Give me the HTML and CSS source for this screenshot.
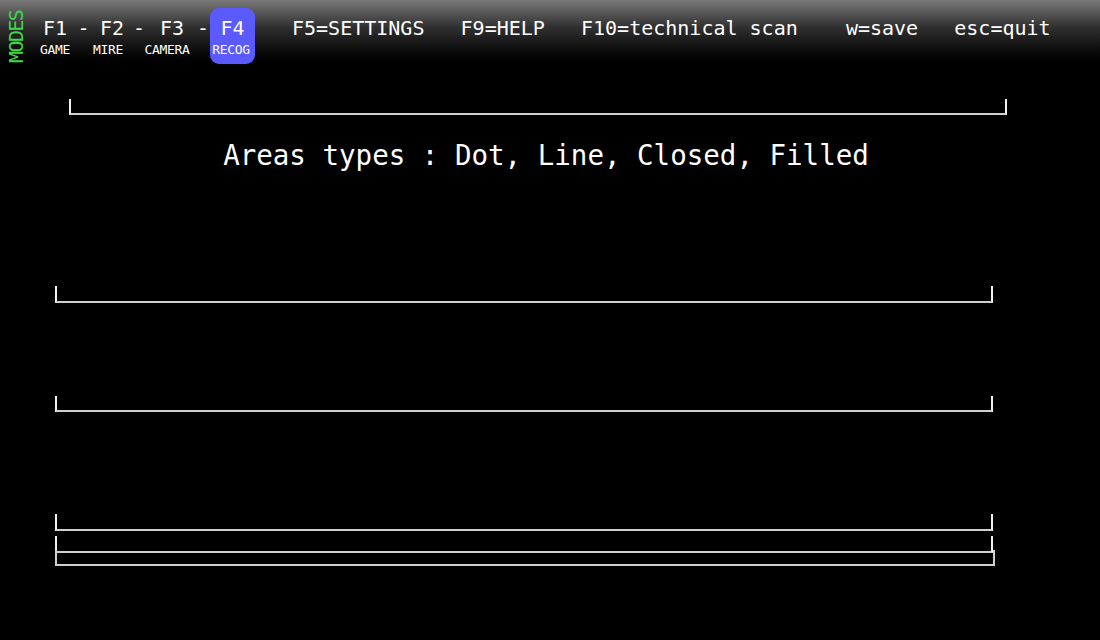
FILE: index.html
```html
<!DOCTYPE html>
<html>
<head>
<meta charset="utf-8">
<link rel="stylesheet" href="styles.css">
</head>
<body>
<header class="topbar">
  <div class="modes-label">MODES</div>
  <div class="modes">
    <div class="mode m1"><span class="key">F1</span><span class="sub">GAME</span></div>
    <span class="sep s1">-</span>
    <div class="mode m2"><span class="key">F2</span><span class="sub">MIRE</span></div>
    <span class="sep s2">-</span>
    <div class="mode m3"><span class="key">F3</span><span class="sub">CAMERA</span></div>
    <span class="sep s3">-</span>
    <div class="mode m4 active"><span class="key">F4</span><span class="sub">RECOG</span></div>
  </div>
  <div class="keys">F5=SETTINGS&nbsp;&nbsp;&nbsp;F9=HELP&nbsp;&nbsp;&nbsp;F10=technical scan&nbsp;&nbsp;&nbsp;&nbsp;w=save&nbsp;&nbsp;&nbsp;esc=quit</div>
</header>
<main class="content">
  <div class="bracket b1"></div>
  <div class="title">Areas types : Dot, Line, Closed, Filled</div>
  <div class="bracket b2"></div>
  <div class="bracket b3"></div>
  <div class="bracket b4"></div>
  <div class="bracket b5"></div>
  <div class="bracket b6"></div>
</main>
</body>
</html>
```
FILE: styles.css
```css
html, body {
  margin: 0;
  padding: 0;
  background: #000;
  color: #fff;
  font-family: "DejaVu Sans Mono", "Liberation Mono", monospace;
  width: 1100px;
  height: 640px;
  overflow: hidden;
}

.topbar {
  height: 64px;
  background: linear-gradient(#7a7a7a 0px, #303030 27px, #0a0a0a 52px, #000 62px);
  display: flex;
  align-items: flex-start;
}

.modes-label {
  writing-mode: vertical-rl;
  transform: rotate(180deg);
  color: #3fd64a;
  font-size: 20px;
  letter-spacing: -1.6px;
  line-height: 16px;
  width: 16px;
  margin-left: 8px;
  margin-top: 10px;
  height: 53px;
  text-align: left;
}

.modes {
  display: flex;
  align-items: flex-start;
  margin-left: 13px;
  margin-top: 8px;
}

.mode {
  display: flex;
  flex-direction: column;
  align-items: center;
  padding-top: 8px;
  padding-bottom: 6px;
}

.m1 { width: 36px; }
.m2 { width: 36px; }
.m3 { width: 48px; }
.m4 { width: 45px; }

.key {
  font-size: 20px;
  line-height: 24px;
  height: 24px;
}

.sub {
  font-size: 13px;
  line-height: 16px;
  letter-spacing: -0.35px;
  margin-top: 2px;
}

.m2 .sub { margin-right: 8px; }
.m3 .sub { margin-right: 10px; }
.m4 .sub { margin-right: 3px; }

.sep {
  font-size: 20px;
  line-height: 24px;
  margin-top: 8px;
  text-align: center;
}
.s1 { width: 21px; }
.s2 { width: 18px; }
.s3 { width: 14px; }

.active {
  background: #5a5aff;
  border-radius: 9px;
}

.keys {
  font-size: 20px;
  line-height: 24px;
  margin-top: 16px;
  margin-left: 37px;
  white-space: nowrap;
}

.content {
  display: flex;
  flex-direction: column;
  align-items: flex-start;
}

.bracket {
  box-sizing: border-box;
  height: 17px;
  width: 938px;
  margin-left: 55px;
  border-left: 2px solid #f2f2f2;
  border-right: 2px solid #f2f2f2;
  border-bottom: 2px solid #d0d0d0;
}

.b1 { margin-top: 35px; margin-left: 69px; height: 16px; }
.b2 { margin-top: 115px; }
.b3 { margin-top: 93px; height: 16px; }
.b4 { margin-top: 102px; }
.b5 { margin-top: 5px; }
.b6 { margin-top: -3px; width: 940px; height: 16px; border-color: #d0d0d0; }

.title {
  align-self: stretch;
  text-align: center;
  padding-right: 8px;
  font-size: 27.5px;
  line-height: 32px;
  margin-top: 24px;
  white-space: nowrap;
}
```
